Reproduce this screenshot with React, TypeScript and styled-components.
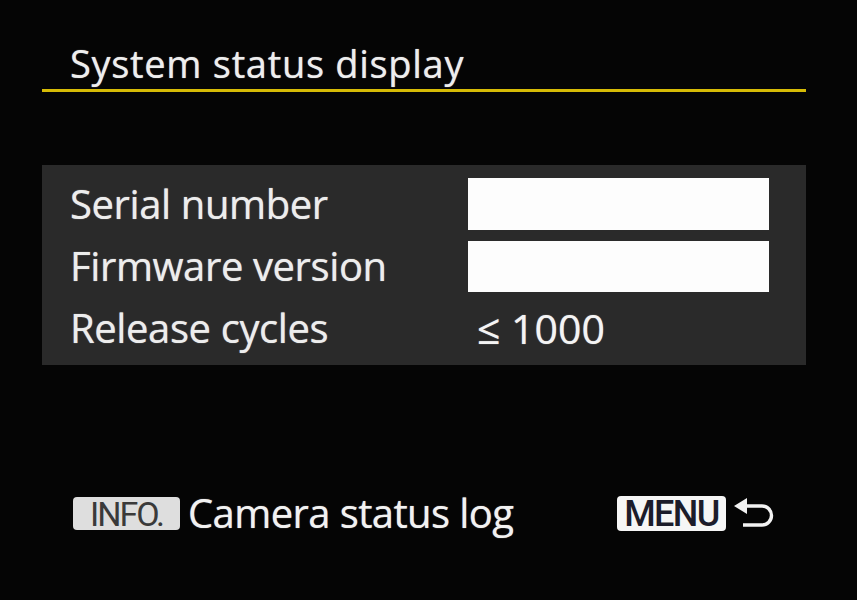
import React from "react";
import styled, { createGlobalStyle } from "styled-components";

const Global = createGlobalStyle`
  html, body { margin: 0; padding: 0; background: #050505; }
  body { font-family: "Open Sans", "Liberation Sans", sans-serif; }
`;

const Screen = styled.div`
  width: 857px;
  height: 600px;
  box-sizing: border-box;
  background: #050505;
  padding: 36px 51px 0 42px;
  display: flex;
  flex-direction: column;
  color: #f2f2f2;
`;

const Header = styled.div`
  border-bottom: 3px solid #d6bb06;
  padding-left: 28px;
  height: 53px;
  display: flex;
  align-items: flex-end;
`;

const glow = `text-shadow: 0 0 1px rgba(255, 255, 255, 0.7);`;

const Title = styled.h1`
  margin: 0 0 7px 0;
  font-size: 38px;
  font-weight: 400;
  letter-spacing: 0.7px;
  line-height: 1;
  color: #eeeeee;
  ${glow}
`;

const Panel = styled.div`
  margin-top: 73px;
  height: 200px;
  box-sizing: border-box;
  background: #2a2a2a;
  padding: 13px 36px 11px 28px;
  display: flex;
  flex-direction: column;
  gap: 10px;
`;

const Row = styled.div`
  height: 52px;
  display: grid;
  grid-template-columns: 398px 301px;
  align-items: center;
`;

const Label = styled.span`
  font-size: 40px;
  font-weight: 400;
  letter-spacing: -0.4px;
  line-height: 1;
  color: #ededed;
  ${glow}
`;

const Hidden = styled.div<{ $h: number }>`
  height: ${(p) => p.$h}px;
  background: #fdfdfd;
`;

const Value = styled.span`
  padding-left: 9px;
  font-size: 41px;
  font-weight: 400;
  letter-spacing: 0px;
  line-height: 1;
  color: #f4f4f4;
  ${glow}
`;

const Footer = styled.div`
  margin-top: 128px;
  padding: 0 30px 0 31px;
  display: flex;
  align-items: center;
  justify-content: space-between;
`;

const Action = styled.div`
  display: flex;
  align-items: center;
  gap: 8px;
`;

const Badge = styled.span<{ $bright?: boolean; $w: number }>`
  display: inline-flex;
  align-items: center;
  justify-content: center;
  box-sizing: border-box;
  width: ${(p) => p.$w}px;
  height: ${(p) => (p.$bright ? 35 : 33)}px;
  padding-top: 2px;
  border-radius: 4px;
  background: ${(p) => (p.$bright ? "#f6f6f6" : "#dedede")};
  color: ${(p) => (p.$bright ? "#1c1c2a" : "#3a3a3a")};
  font-family: Roboto, "Open Sans", sans-serif;
  font-size: ${(p) => (p.$bright ? 36 : 34)}px;
  font-weight: ${(p) => (p.$bright ? 500 : 400)};
  letter-spacing: ${(p) => (p.$bright ? -1.6 : -2)}px;
  line-height: 1;
`;

const ActionText = styled.span`
  font-size: 40px;
  font-weight: 400;
  letter-spacing: -0.6px;
  line-height: 1;
  color: #f2f2f2;
  ${glow}
`;

const BackIcon = () => (
  <svg width="42" height="32" viewBox="0 0 42 32" aria-hidden="true">
    <polygon points="0,9 13,1 13,17" fill="#f2f2f2" />
    <path
      d="M11 9 H28 A9.5 9.5 0 0 1 28 28 H9"
      fill="none"
      stroke="#f2f2f2"
      strokeWidth="3.4"
    />
  </svg>
);

export default function App() {
  return (
    <>
      <Global />
      <Screen>
        <Header>
          <Title>System status display</Title>
        </Header>
        <Panel>
          <Row>
            <Label>Serial number</Label>
            <Hidden $h={52} />
          </Row>
          <Row>
            <Label>Firmware version</Label>
            <Hidden $h={51} />
          </Row>
          <Row>
            <Label>Release cycles</Label>
            <Value>≤ 1000</Value>
          </Row>
        </Panel>
        <Footer>
          <Action>
            <Badge $w={107}>INFO.</Badge>
            <ActionText>Camera status log</ActionText>
          </Action>
          <Action>
            <Badge $bright $w={109}>MENU</Badge>
            <BackIcon />
          </Action>
        </Footer>
      </Screen>
    </>
  );
}
